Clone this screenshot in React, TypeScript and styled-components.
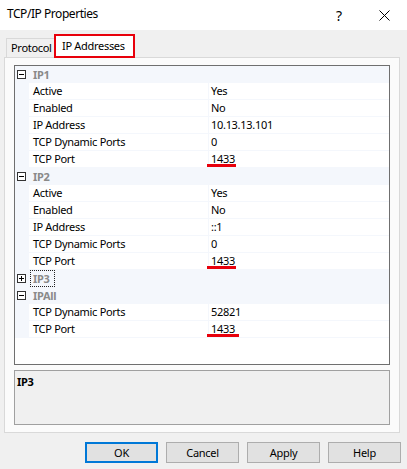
import React from "react";
import styled, { createGlobalStyle } from "styled-components";

const Global = createGlobalStyle`
  html, body { margin: 0; padding: 0; background: #f0f0f0; }
  body {
    font-family: "Noto Sans", "Open Sans", sans-serif;
    font-size: 11px;
    letter-spacing: -0.3px;
    color: #000;
  }
`;

const Window = styled.div`
  width: 407px;
  height: 469px;
  background: #f0f0f0;
  display: flex;
  flex-direction: column;
  overflow: hidden;
`;

const TitleBar = styled.div`
  height: 30px;
  background: #fff;
  display: flex;
  align-items: center;
  padding-left: 7px;
  box-sizing: border-box;
`;

const Title = styled.div`
  flex: 1;
  font-size: 12px;
  letter-spacing: -0.45px;
  line-height: 16px;
  margin-top: -2px;
`;

const CaptionButton = styled.div<{ $w: number; $gap?: number }>`
  width: ${(p) => p.$w}px;
  margin-right: ${(p) => p.$gap ?? 0}px;
  height: 30px;
  display: flex;
  align-items: center;
  justify-content: center;
  font-size: 14px;
`;

const TabStrip = styled.div`
  display: flex;
  align-items: flex-end;
  height: 23px;
  margin-top: 4px;
  padding-left: 6px;
  position: relative;
  z-index: 1;
`;

const Tab = styled.div<{ $active?: boolean }>`
  box-sizing: border-box;
  display: flex;
  align-items: center;
  ${(p) =>
    p.$active
      ? `
    height: 24px;
    margin-bottom: -1px;
    padding: 0 8px 2px 6px;
    background: #fff;
    border: 2px solid #e8000b;
  `
      : `
    height: 19px;
    width: 48px;
    padding: 0 0 1px 4px;
    border: 1px solid #d9d9d9;
    border-bottom: none;
    border-right: none;
    background: #f0f0f0;
  `}
`;

const Panel = styled.div`
  margin: 0 7px 0 4px;
  height: 376px;
  box-sizing: border-box;
  border: 1px solid #d9d9d9;
  background: #fbfbfb;
  padding: 7px 9px 7px 9px;
  display: flex;
  flex-direction: column;
  gap: 5px;
`;

const Grid = styled.div`
  height: 300px;
  box-sizing: border-box;
  border: 1px solid #6f6f6f;
  background: #fff;
  display: flex;
  flex-direction: column;
`;

const CategoryRow = styled.div`
  height: 17px;
  display: flex;
  align-items: center;
  background: #f4f7fc;
  box-sizing: border-box;
  padding-left: 2px;
`;

const ExpandBox = styled.div`
  width: 9px;
  height: 9px;
  box-sizing: border-box;
  border: 1px solid #333;
  background: #fff;
  margin-right: 4px;
  margin-top: -1px;
  display: flex;
  align-items: center;
  justify-content: center;
`;

const CategoryName = styled.div<{ $focused?: boolean }>`
  font-weight: bold;
  color: #8a8a8a;
  height: 17px;
  line-height: 16px;
  padding: 0 4px 0 2px;
  box-sizing: border-box;
  border: 1px ${(p) => (p.$focused ? "dotted #222" : "solid transparent")};
`;

const PropRow = styled.div`
  height: 17px;
  display: flex;
  box-sizing: border-box;
`;

const Margin = styled.div`
  width: 14px;
  background: #f4f7fc;
`;

const Label = styled.div`
  width: 179px;
  padding-left: 4px;
  box-sizing: border-box;
  border-bottom: 1px solid #f4f7fc;
  line-height: 16px;
  white-space: nowrap;
`;

const Value = styled.div`
  flex: 1;
  padding-left: 2px;
  border-left: 1px solid #f4f7fc;
  border-bottom: 1px solid #f4f7fc;
  line-height: 16px;
`;

const Marked = styled.span<{ $extra: number }>`
  position: relative;
  &::after {
    content: "";
    position: absolute;
    left: -4px;
    right: ${(p) => -p.$extra}px;
    top: 13px;
    height: 3px;
    background: #e8000b;
  }
`;

const Description = styled.div`
  height: 55px;
  box-sizing: border-box;
  border: 1px solid #a0a0a0;
  background: #f0f0f0;
  padding: 3px 0 0 2px;
  font-weight: bold;
  line-height: 16px;
`;

const ButtonBar = styled.div`
  display: flex;
  justify-content: flex-end;
  gap: 8px;
  padding: 9px 6px 0 0;
`;

const Button = styled.div<{ $default?: boolean }>`
  width: 73px;
  height: 21px;
  box-sizing: border-box;
  background: #e1e1e1;
  border: ${(p) => (p.$default ? "2px solid #0078d7" : "1px solid #adadad")};
  display: flex;
  align-items: center;
  justify-content: center;
`;

type Prop = { name: string; value: string; mark?: number };
type Category = { name: string; expanded: boolean; focused?: boolean; props: Prop[] };

const categories: Category[] = [
  {
    name: "IP1",
    expanded: true,
    props: [
      { name: "Active", value: "Yes" },
      { name: "Enabled", value: "No" },
      { name: "IP Address", value: "10.13.13.101" },
      { name: "TCP Dynamic Ports", value: "0" },
      { name: "TCP Port", value: "1433", mark: 1 },
    ],
  },
  {
    name: "IP2",
    expanded: true,
    props: [
      { name: "Active", value: "Yes" },
      { name: "Enabled", value: "No" },
      { name: "IP Address", value: "::1" },
      { name: "TCP Dynamic Ports", value: "0" },
      { name: "TCP Port", value: "1433", mark: 1 },
    ],
  },
  { name: "IP3", expanded: false, focused: true, props: [] },
  {
    name: "IPAll",
    expanded: true,
    props: [
      { name: "TCP Dynamic Ports", value: "52821" },
      { name: "TCP Port", value: "1433", mark: 4 },
    ],
  },
];

const Toggle = ({ expanded }: { expanded: boolean }) => (
  <ExpandBox>
    <svg width="7" height="7" viewBox="0 0 7 7">
      <rect x="1" y="3" width="5" height="1" fill="#000" />
      {!expanded && <rect x="3" y="1" width="1" height="5" fill="#000" />}
    </svg>
  </ExpandBox>
);

export default function App() {
  return (
    <>
      <Global />
      <Window>
        <TitleBar>
          <Title>TCP/IP Properties</Title>
          <CaptionButton $w={20} $gap={12}>?</CaptionButton>
          <CaptionButton $w={46}>
            <svg width="11" height="11" viewBox="0 0 11 11">
              <path d="M0.5 0.5 L10.5 10.5 M10.5 0.5 L0.5 10.5" stroke="#000" strokeWidth="1" fill="none" />
            </svg>
          </CaptionButton>
        </TitleBar>
        <TabStrip>
          <Tab>Protocol</Tab>
          <Tab $active>IP Addresses</Tab>
        </TabStrip>
        <Panel>
          <Grid>
            {categories.map((c) => (
              <React.Fragment key={c.name}>
                <CategoryRow>
                  <Toggle expanded={c.expanded} />
                  <CategoryName $focused={c.focused}>{c.name}</CategoryName>
                </CategoryRow>
                {c.props.map((p) => (
                  <PropRow key={c.name + p.name}>
                    <Margin />
                    <Label>{p.name}</Label>
                    <Value>{p.mark ? <Marked $extra={p.mark}>{p.value}</Marked> : p.value}</Value>
                  </PropRow>
                ))}
              </React.Fragment>
            ))}
          </Grid>
          <Description>IP3</Description>
        </Panel>
        <ButtonBar>
          <Button $default>OK</Button>
          <Button>Cancel</Button>
          <Button>Apply</Button>
          <Button>Help</Button>
        </ButtonBar>
      </Window>
    </>
  );
}
